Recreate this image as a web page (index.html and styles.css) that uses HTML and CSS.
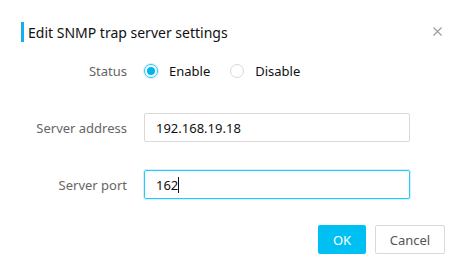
FILE: index.html
```html
<!DOCTYPE html>
<html>
    <head>
    <link rel="stylesheet" href="styles.css">
    </head>
    <body>
        <div class="dialog">
            <div class="header">
                <span class="title">Edit SNMP trap server settings</span>
                <span class="close">
                    <svg width="9" height="9" viewBox="0 0 9 9"><path d="M0.5 0.5 L8.5 8.5 M8.5 0.5 L0.5 8.5" stroke="#9a9a9a" stroke-width="1.1" fill="none"/></svg>
                </span>
            </div>

            <div class="row row-status">
                <label class="label">Status</label>
                <div class="radios">
                    <span class="radio checked"></span><span class="radio-text">Enable</span>
                    <span class="radio"></span><span class="radio-text">Disable</span>
                </div>
            </div>

            <div class="row">
                <label class="label">Server address</label>
                <div class="input">192.168.19.18</div>
            </div>

            <div class="row">
                <label class="label">Server port</label>
                <div class="input focused">162<span class="caret"></span></div>
            </div>

            <div class="buttons">
                <button class="btn btn-ok">OK</button>
                <button class="btn btn-cancel">Cancel</button>
            </div>
        </div>
    </body>
</html>
```

FILE: styles.css
```css
body {
    margin: 0;
    background-color: #ffffff;
    font-family: "Noto Sans", "Open Sans", sans-serif;
    font-size: 13px;
    color: #222222;
}

.dialog {
    width: 467px;
    height: 275px;
    box-sizing: border-box;
    padding-top: 22px;
}

.header {
    display: flex;
    align-items: center;
    height: 20px;
    margin-left: 21px;
    border-left: 3px solid #14aee8;
    padding-left: 4px;
}

.title {
    font-size: 14px;
    color: #111111;
    flex: 1;
}

.close {
    display: flex;
    margin-right: 25px;
    margin-top: -1px;
}

.row {
    display: flex;
    align-items: center;
    height: 29px;
    margin-top: 28px;
}

.row-status {
    margin-top: 14px;
}

.label {
    width: 127px;
    text-align: right;
    margin-right: 17px;
    color: #666666;
}

.radios {
    display: flex;
    align-items: center;
}

.radio {
    width: 14px;
    height: 14px;
    box-sizing: border-box;
    border: 1px solid #d9d9d9;
    border-radius: 50%;
    margin-right: 11px;
    position: relative;
}

.radio.checked {
    border-color: #2cc4f5;
    box-shadow: 0 0 0 1px #d4f1fc;
}

.radio.checked::after {
    content: "";
    position: absolute;
    left: 2px;
    top: 2px;
    width: 8px;
    height: 8px;
    border-radius: 50%;
    background-color: #00b4f0;
}

.radio-text {
    margin-right: 20px;
    color: #111111;
}

.input {
    width: 266px;
    height: 29px;
    box-sizing: border-box;
    border: 1px solid #d9d9d9;
    border-radius: 2px;
    padding: 0 11px;
    display: flex;
    align-items: center;
    color: #111111;
}

.input.focused {
    border-color: #22ccfa;
    box-shadow: 0 0 0 1px #d2f2fd;
}

.caret {
    display: inline-block;
    width: 1px;
    height: 16px;
    background-color: #111111;
}

.buttons {
    display: flex;
    justify-content: flex-end;
    margin-top: 26px;
    margin-right: 22px;
}

.btn {
    height: 29px;
    box-sizing: border-box;
    font-family: "Noto Sans", "Open Sans", sans-serif;
    font-size: 13px;
    border-radius: 2px;
    padding: 0;
}

.btn-ok {
    width: 48px;
    background-color: #00bff3;
    border: none;
    color: #ffffff;
    margin-right: 9px;
}

.btn-cancel {
    width: 70px;
    background-color: #ffffff;
    border: 1px solid #d9d9d9;
    color: #555555;
}
```
